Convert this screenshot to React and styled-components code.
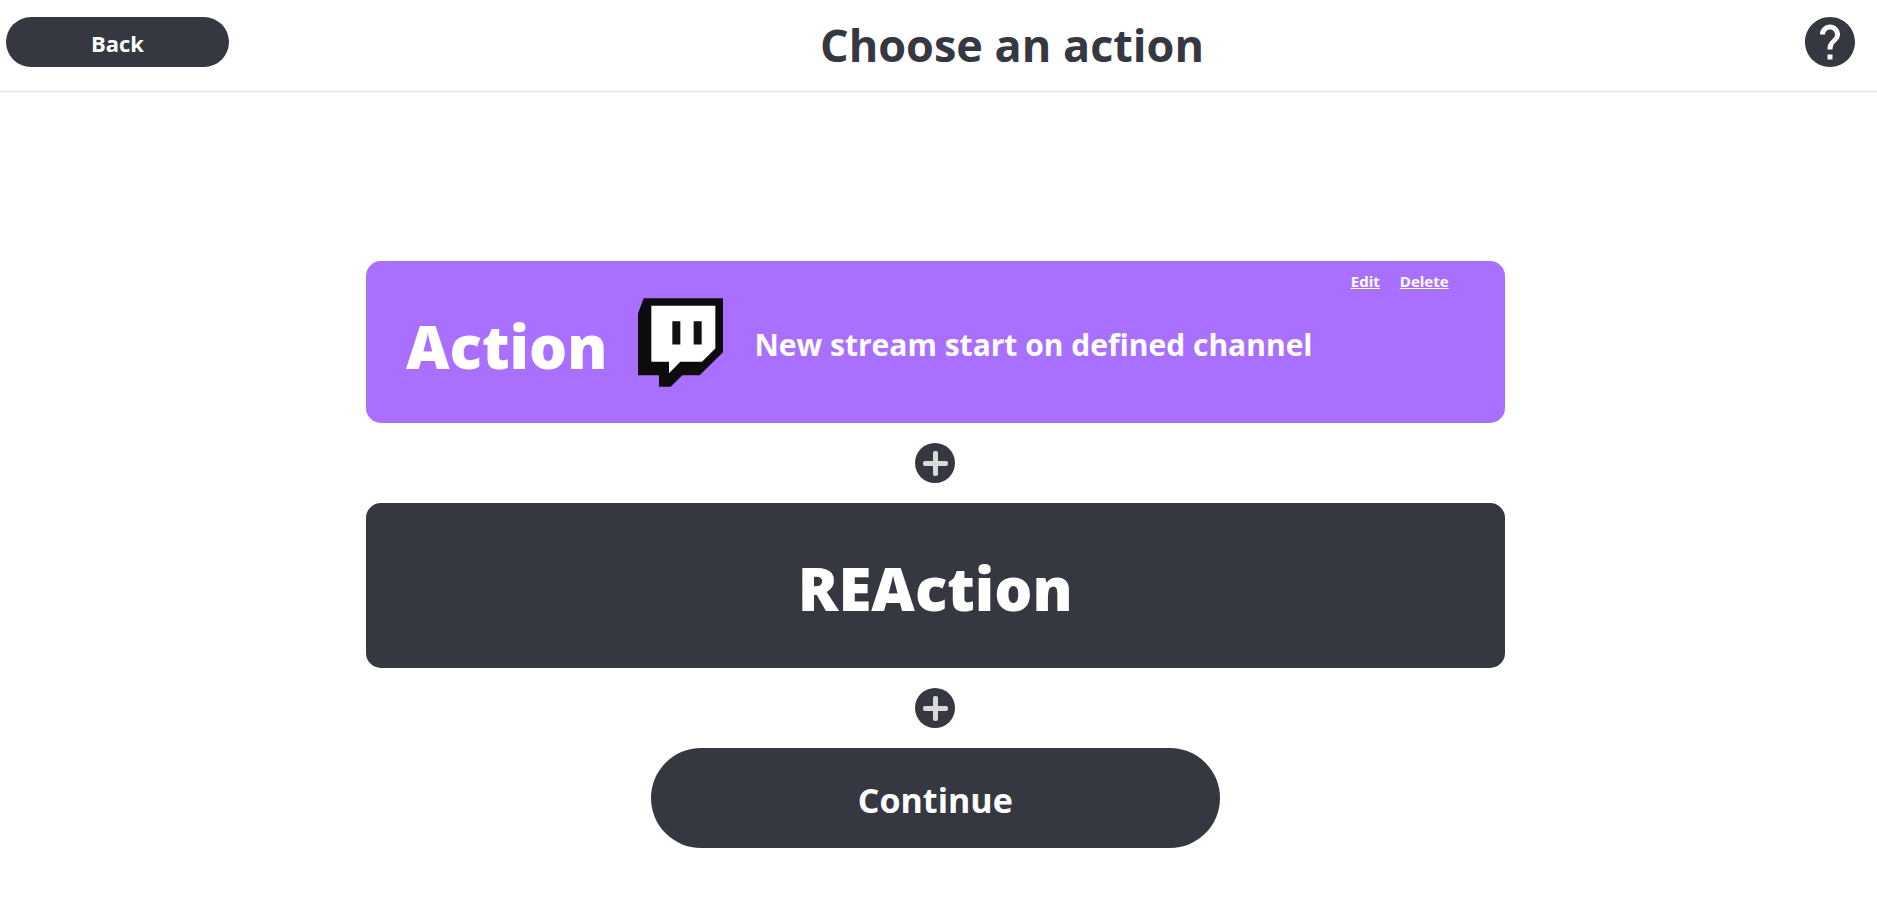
import React from "react";
import styled, { createGlobalStyle } from "styled-components";

const GlobalStyle = createGlobalStyle`
  *, *::before, *::after { box-sizing: border-box; }
  body {
    margin: 0;
    background: #ffffff;
    color: #363841;
    font-family: "Segoe UI", "Open Sans", "Noto Sans", sans-serif;
  }
`;

const Header = styled.header`
  display: flex;
  align-items: center;
  justify-content: space-between;
  height: 92px;
  padding: 0 22px 8px 6px;
  border-bottom: 1px solid #e2e2e4;
`;

const PillButton = styled.button`
  display: flex;
  align-items: center;
  justify-content: center;
  width: ${(p) => (p.$large ? "50%" : "223px")};
  height: ${(p) => (p.$large ? "100px" : "50px")};
  padding: ${(p) => (p.$large ? "4px" : "2px")} 0 0;
  border: 0;
  border-radius: 50px;
  background: #363841;
  color: #ffffff;
  font: inherit;
  font-size: ${(p) => (p.$large ? "34px" : "22px")};
  font-weight: 700;
  cursor: pointer;
`;

const Title = styled.h1`
  margin: 0;
  padding: 6px 10px 0 0;
  font-size: 45px;
  line-height: 64px;
  font-weight: 700;
`;

const IconButton = styled.button`
  display: block;
  padding: 0;
  border: 0;
  background: none;
  color: #363841;
  cursor: pointer;

  svg { display: block; }
`;

const Main = styled.main`
  display: flex;
  flex-direction: column;
  align-items: center;
  gap: 20px;
  padding: 169px 19.84% 54px 19.5%;
`;

const ActionCard = styled.section`
  display: flex;
  align-items: center;
  gap: 31px;
  width: 100%;
  min-height: 162px;
  padding: 0 56px 0 40px;
  border-radius: 15px;
  background: #a970ff;
  color: #ffffff;

  svg { flex: none; }
`;

const CardTitle = styled.h2`
  margin: 0;
  padding-top: 8px;
  font-size: 60px;
  line-height: 80px;
  font-weight: 800;
`;

const Description = styled.p`
  margin: 0;
  padding-top: 6px;
  font-size: 30px;
  line-height: 40px;
  font-weight: 700;
`;

const CardLinks = styled.nav`
  display: flex;
  align-self: flex-start;
  gap: 20px;
  margin-left: auto;
  padding-top: 10px;
`;

const CardLink = styled.a`
  color: inherit;
  font-size: 15px;
  line-height: 20px;
  font-weight: 700;
`;

const ReactionCard = styled.button`
  width: 100%;
  min-height: 165px;
  padding: 4px 0 0;
  border: 0;
  border-radius: 15px;
  background: #363841;
  color: #ffffff;
  font: inherit;
  font-size: 60px;
  line-height: 80px;
  font-weight: 800;
  cursor: pointer;
`;

function TwitchLogo() {
  return (
    <svg width="85" height="89" viewBox="863 142 255 266" role="img" aria-label="Twitch">
      <path
        fill="#0c0c0c"
        d="M880 142H1118V304L1048 373H996L961 408H926V373H863V188Z"
      />
      <path fill="#ffffff" d="M903 165H1095V293L1055 333H990L956 367V333H903Z" />
      <path fill="#111111" d="M966 211H990V281H966ZM1030 211H1054V281H1030Z" />
    </svg>
  );
}

function PlusIcon() {
  return (
    <svg width="40" height="40" viewBox="0 0 40 40" aria-hidden="true">
      <circle cx="20" cy="20" r="20" fill="currentColor" />
      <rect x="8" y="18" width="25" height="5" rx="2" fill="#d9d9d9" />
      <rect x="18" y="8" width="5" height="25" rx="2" fill="#d9d9d9" />
    </svg>
  );
}

function HelpIcon() {
  return (
    <svg width="50" height="50" viewBox="2 2 20 20" aria-hidden="true">
      <path
        fill="currentColor"
        d="M12 2C6.48 2 2 6.48 2 12s4.48 10 10 10 10-4.48 10-10S17.52 2 12 2zm1 17h-2v-2h2v2zm2.07-7.75l-.9.92C13.45 12.9 13 13.5 13 15h-2v-.5c0-1.1.45-2.1 1.17-2.83l1.24-1.26c.37-.36.59-.86.59-1.41 0-1.1-.9-2-2-2s-2 .9-2 2H8c0-2.21 1.79-4 4-4s4 1.79 4 4c0 .88-.36 1.68-.93 2.25z"
      />
    </svg>
  );
}

export default function App() {
  return (
    <>
      <GlobalStyle />
      <Header>
        <PillButton type="button">Back</PillButton>
        <Title>Choose an action</Title>
        <IconButton type="button" aria-label="Help">
          <HelpIcon />
        </IconButton>
      </Header>
      <Main>
        <ActionCard>
          <CardTitle>Action</CardTitle>
          <TwitchLogo />
          <Description>New stream start on defined channel</Description>
          <CardLinks aria-label="Action options">
            <CardLink href="#edit">Edit</CardLink>
            <CardLink href="#delete">Delete</CardLink>
          </CardLinks>
        </ActionCard>
        <IconButton type="button" aria-label="Add reaction">
          <PlusIcon />
        </IconButton>
        <ReactionCard type="button">REAction</ReactionCard>
        <IconButton type="button" aria-label="Add another reaction">
          <PlusIcon />
        </IconButton>
        <PillButton type="button" $large>
          Continue
        </PillButton>
      </Main>
    </>
  );
}
